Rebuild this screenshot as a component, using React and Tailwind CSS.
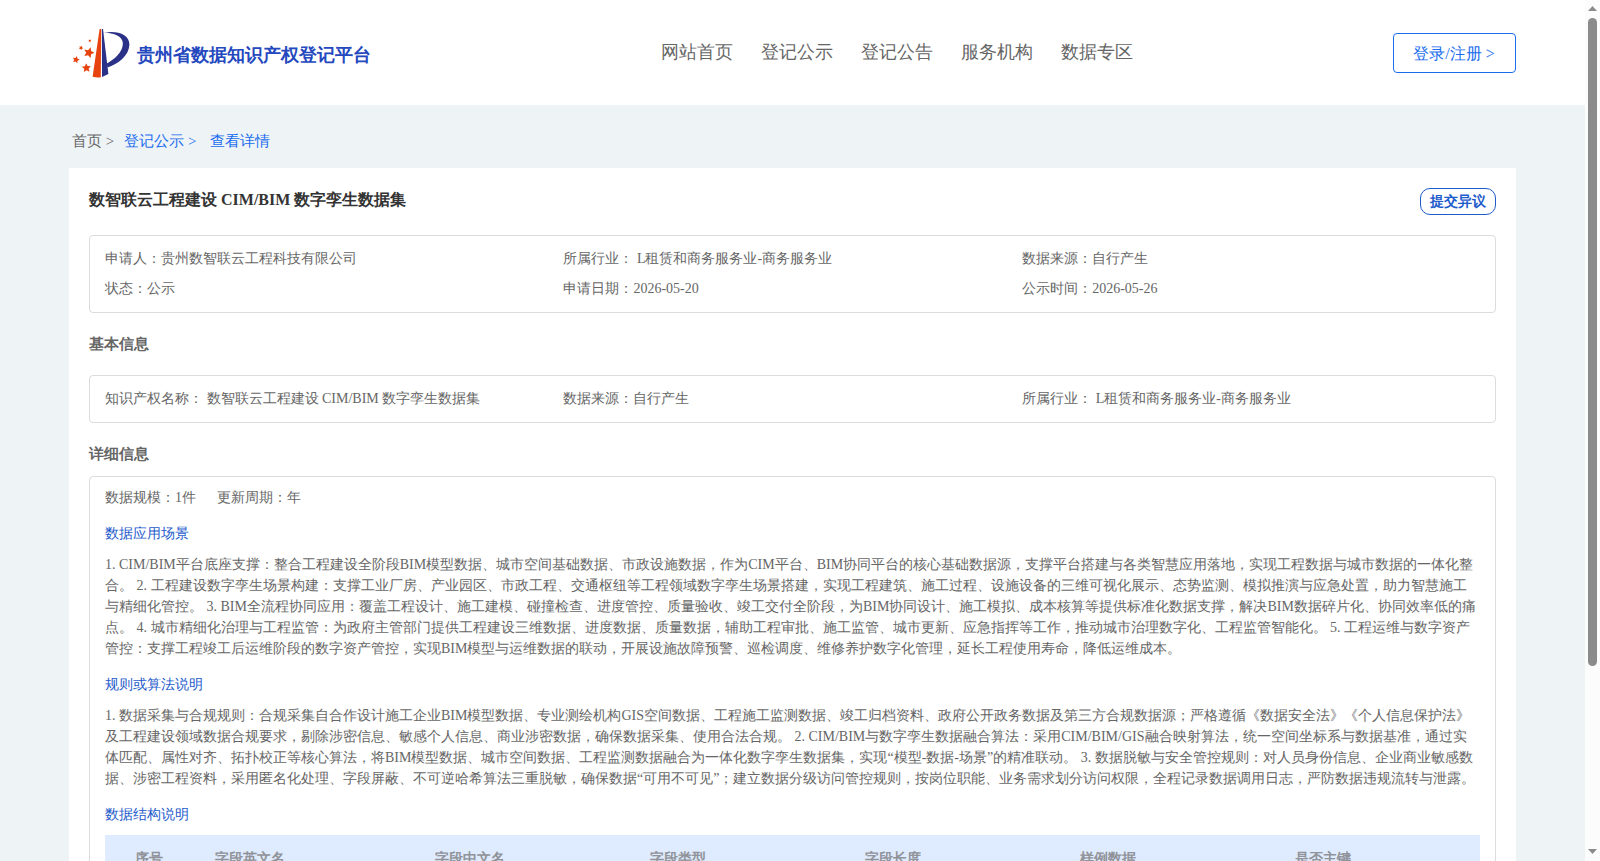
import React from 'react';

const NAV = ['网站首页', '登记公示', '登记公告', '服务机构', '数据专区'];

const SUMMARY = [
  '申请人：贵州数智联云工程科技有限公司',
  '所属行业： L租赁和商务服务业-商务服务业',
  '数据来源：自行产生',
  '状态：公示',
  '申请日期：2026-05-20',
  '公示时间：2026-05-26',
];

const BASIC = [
  '知识产权名称： 数智联云工程建设 CIM/BIM 数字孪生数据集',
  '数据来源：自行产生',
  '所属行业： L租赁和商务服务业-商务服务业',
];

const SCENE =
  '1. CIM/BIM平台底座支撑：整合工程建设全阶段BIM模型数据、城市空间基础数据、市政设施数据，作为CIM平台、BIM协同平台的核心基础数据源，支撑平台搭建与各类智慧应用落地，实现工程数据与城市数据的一体化整合。 2. 工程建设数字孪生场景构建：支撑工业厂房、产业园区、市政工程、交通枢纽等工程领域数字孪生场景搭建，实现工程建筑、施工过程、设施设备的三维可视化展示、态势监测、模拟推演与应急处置，助力智慧施工与精细化管控。 3. BIM全流程协同应用：覆盖工程设计、施工建模、碰撞检查、进度管控、质量验收、竣工交付全阶段，为BIM协同设计、施工模拟、成本核算等提供标准化数据支撑，解决BIM数据碎片化、协同效率低的痛点。 4. 城市精细化治理与工程监管：为政府主管部门提供工程建设三维数据、进度数据、质量数据，辅助工程审批、施工监管、城市更新、应急指挥等工作，推动城市治理数字化、工程监管智能化。 5. 工程运维与数字资产管控：支撑工程竣工后运维阶段的数字资产管控，实现BIM模型与运维数据的联动，开展设施故障预警、巡检调度、维修养护数字化管理，延长工程使用寿命，降低运维成本。';

const RULES =
  '1. 数据采集与合规规则：合规采集自合作设计施工企业BIM模型数据、专业测绘机构GIS空间数据、工程施工监测数据、竣工归档资料、政府公开政务数据及第三方合规数据源；严格遵循《数据安全法》《个人信息保护法》及工程建设领域数据合规要求，剔除涉密信息、敏感个人信息、商业涉密数据，确保数据采集、使用合法合规。 2. CIM/BIM与数字孪生数据融合算法：采用CIM/BIM/GIS融合映射算法，统一空间坐标系与数据基准，通过实体匹配、属性对齐、拓扑校正等核心算法，将BIM模型数据、城市空间数据、工程监测数据融合为一体化数字孪生数据集，实现“模型-数据-场景”的精准联动。 3. 数据脱敏与安全管控规则：对人员身份信息、企业商业敏感数据、涉密工程资料，采用匿名化处理、字段屏蔽、不可逆哈希算法三重脱敏，确保数据“可用不可见”；建立数据分级访问管控规则，按岗位职能、业务需求划分访问权限，全程记录数据调用日志，严防数据违规流转与泄露。';

const COLUMNS = ['字段英文名', '字段中文名', '字段类型', '字段长度', '样例数据', '是否主键'];

function Star({ x, y, r, rotate = 0 }) {
  const points = Array.from({ length: 10 }, (_, i) => {
    const radius = i % 2 ? r * 0.48 : r;
    const a = ((i * 36 - 90 + rotate) * Math.PI) / 180;
    return `${(x + radius * Math.cos(a)).toFixed(2)},${(y + radius * Math.sin(a)).toFixed(2)}`;
  }).join(' ');
  return <polygon points={points} fill="#e8430f" />;
}

function Logo() {
  return (
    <svg width="60" height="52" viewBox="0 0 60 52" className="shrink-0">
      <path d="M27.6 2 L29.2 2 L28.8 50.3 Q24.5 50.8 20.6 49.8 Z" fill="#e8430f" />
      <path d="M29.9 2 L31 2 L36.4 47 L30 50 Z" fill="#2b3186" />
      <path
        d="M31.8 5.5 C46 3.2 57.6 7.5 57.4 17.6 C57.1 29 46 37 35.4 40.6 L34.9 36.4 C42.5 32.5 50.4 25.5 50.9 16.8 C51.2 9.2 42 6 31.8 5.5 Z"
        fill="#2b3186"
      />
      <Star x={16.9} y={25.7} r={5.6} rotate={18} />
      <Star x={4} y={32.7} r={3.7} rotate={14} />
      <Star x={14.4} y={41} r={4.8} rotate={-4} />
      <Star x={9} y={20.9} r={2.3} rotate={25} />
      <Star x={17.8} y={13.8} r={1.7} rotate={20} />
    </svg>
  );
}

function InfoGrid({ items }) {
  return (
    <div className="grid grid-cols-[458.45px_458.7px_1fr] rounded border border-[#dcdcdc] px-[15px] py-2 text-sm leading-[30px]">
      {items.map((item) => (
        <div key={item} className="whitespace-nowrap">{item}</div>
      ))}
    </div>
  );
}

function SubHeading({ children }) {
  return <h3 className="text-sm leading-[21px] text-[#1e5bcb]">{children}</h3>;
}

function Scrollbar() {
  return (
    <div className="flex w-[15px] shrink-0 flex-col items-center bg-[#fcfcfc]">
      <svg width="15" height="18" viewBox="0 0 15 18">
        <path d="M3 11 L7.5 6 L12 11 Z" fill="#8b8b8b" />
      </svg>
      <div className="h-[648px] w-[9px] rounded-full bg-[#8b8b8b]" />
      <svg width="15" height="18" viewBox="0 0 15 18" className="mt-auto">
        <path d="M3 6 L7.5 11 L12 6 Z" fill="#8b8b8b" />
      </svg>
    </div>
  );
}

export default function App() {
  return (
    <div className="flex h-[861px] w-[1600px] overflow-hidden bg-[#eef3f6] font-['Liberation_Serif',serif] text-[#666]">
      <div className="flex min-w-0 flex-1 flex-col">
        <header className="flex h-[105px] shrink-0 items-start bg-white pr-[69px] pl-[72px]">
          <div className="flex w-[588.5px] items-center pt-[27px]">
            <Logo />
            <span className="ml-[5px] pt-1 text-lg leading-7 font-bold text-[#2448be]">贵州省数据知识产权登记平台</span>
          </div>
          <nav className="flex gap-7 pt-[38px] text-lg leading-7">
            {NAV.map((label) => (
              <a key={label}>{label}</a>
            ))}
          </nav>
          <button className="mt-[33px] ml-auto h-10 w-[123px] rounded border border-[#1a6dee] pt-[2px] pr-px text-base text-[#1a6dee]">
            登录/注册 &gt;
          </button>
        </header>

        <div className="flex h-[63px] shrink-0 items-center pt-[9px] pl-[72px] text-[15px] leading-6">
          <span>首页 &gt;</span>
          <span className="ml-[10px] text-[#1a6dee]">登记公示 &gt;</span>
          <span className="ml-[13.5px] text-[#1a6dee]">查看详情</span>
        </div>

        <main className="mr-[69px] ml-[69px] h-[693px] overflow-hidden bg-white px-5 pt-5">
          <div className="flex h-[47px] items-start justify-between">
            <h1 className="text-base leading-6 font-bold text-[#333]">数智联云工程建设 CIM/BIM 数字孪生数据集</h1>
            <button className="h-[27px] w-[76px] rounded-[10px] border border-[#1e5bcb] text-sm font-bold text-[#1e5bcb]">
              提交异议
            </button>
          </div>

          <InfoGrid items={SUMMARY} />
          <h2 className="h-[62px] pt-5 text-[15px] leading-[22px] font-bold">基本信息</h2>
          <InfoGrid items={BASIC} />
          <h2 className="h-[53px] pt-5 text-[15px] leading-[22px] font-bold">详细信息</h2>

          <section className="rounded border border-[#dcdcdc] px-[15px] pt-[10px] text-sm leading-[21px]">
            <div className="flex gap-[21px]">
              <span>数据规模：1件</span>
              <span>更新周期：年</span>
            </div>
            <div className="mt-[15px]">
              <SubHeading>数据应用场景</SubHeading>
              <p className="mt-[10px]">{SCENE}</p>
            </div>
            <div className="mt-[15px]">
              <SubHeading>规则或算法说明</SubHeading>
              <p className="mt-[10px]">{RULES}</p>
            </div>
            <div className="mt-[15px]">
              <SubHeading>数据结构说明</SubHeading>
              <div className="mt-[10px] flex h-[47px] items-center bg-[#dfebfe] font-bold text-[#909399]">
                <div className="w-[88px] shrink-0 text-center">序号</div>
                {COLUMNS.map((label) => (
                  <div key={label} className="w-[215px] shrink-0 pl-[22px] nth-2:w-[220px]">{label}</div>
                ))}
              </div>
            </div>
          </section>
        </main>
      </div>
      <Scrollbar />
    </div>
  );
}
